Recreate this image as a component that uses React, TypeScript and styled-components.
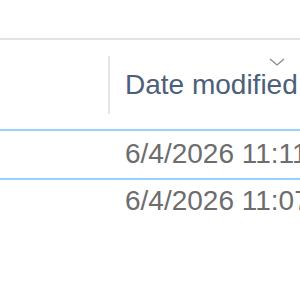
import React from "react";
import styled, { createGlobalStyle } from "styled-components";

const Global = createGlobalStyle`
  html, body { margin: 0; padding: 0; background: #ffffff; }
  body { font-family: "Liberation Sans", Arial, sans-serif; }
`;

const Window = styled.div`
  width: 300px;
  height: 300px;
  overflow: hidden;
  background: #ffffff;
  display: flex;
  flex-direction: column;
`;

const TopArea = styled.div`
  height: 38px;
  flex: none;
  border-bottom: 2px solid #e3e3e3;
`;

const HeaderRow = styled.div`
  display: grid;
  grid-template-columns: 108px 2px 1fr;
  height: 89px;
  flex: none;
`;

const Divider = styled.div`
  margin-top: 16px;
  height: 58px;
  background: #e5e5e5;
`;

const HeaderCell = styled.div`
  position: relative;
  padding: 29px 0 0 15px;
  font-size: 28px;
  line-height: 32px;
  color: #4c607a;
  white-space: nowrap;
`;

const SortChevron = styled.svg`
  position: absolute;
  top: 18px;
  left: 159px;
`;

const Rows = styled.div`
  display: flex;
  flex-direction: column;
  padding-top: 2px;
`;

const Row = styled.div<{ $selected?: boolean }>`
  position: relative;
  display: grid;
  grid-template-columns: 110px 1fr;
  height: 47px;
  box-shadow: ${(p) =>
    p.$selected ? "0 -2px 0 #99d1ff, 0 2px 0 #99d1ff" : "none"};
  z-index: ${(p) => (p.$selected ? 1 : 0)};
`;

const Cell = styled.div`
  padding: 7px 0 0 15px;
  font-size: 28px;
  line-height: 32px;
  color: #6d6d6d;
  white-space: nowrap;
`;

const files = [
  { date: "6/4/2026 11:11", selected: true },
  { date: "6/4/2026 11:07", selected: false },
];

export default function App() {
  return (
    <Window>
      <Global />
      <TopArea />
      <HeaderRow>
        <div />
        <Divider />
        <HeaderCell>
          <SortChevron width="16" height="8" viewBox="0 0 16 8">
            <polyline
              points="1,1 8,7 15,1"
              fill="none"
              stroke="#8a8a8a"
              strokeWidth="1.3"
            />
          </SortChevron>
          Date modified
        </HeaderCell>
      </HeaderRow>
      <Rows>
        {files.map((f) => (
          <Row key={f.date} $selected={f.selected}>
            <div />
            <Cell>{f.date}</Cell>
          </Row>
        ))}
      </Rows>
    </Window>
  );
}
